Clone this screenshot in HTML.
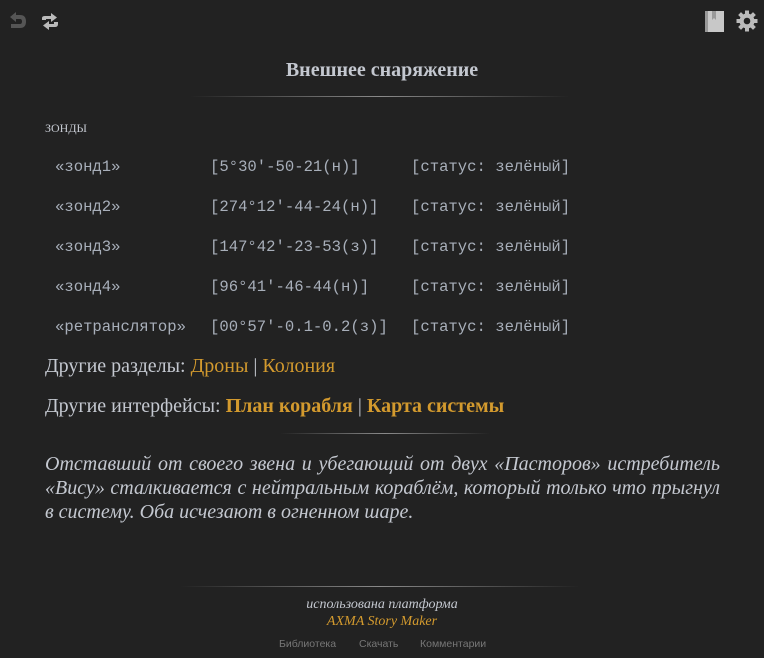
<!DOCTYPE html>
<html><head><meta charset="utf-8"><style>
html,body{margin:0;padding:0;background:#222;width:764px;height:658px;overflow:hidden;}
body{font-family:"Liberation Serif",serif;color:#c4c8d0;position:relative;}
.a{position:absolute;white-space:nowrap;}
.mono{font-family:"Liberation Mono",monospace;font-size:15.6px;color:#a8afba;}
.or{color:#d39a2e;}
.hr{position:absolute;height:1px;background:linear-gradient(to right,rgba(140,140,140,0),#8a8a8a 50%,rgba(140,140,140,0));}
.f{font-family:'Liberation Sans',sans-serif;font-size:10.5px;color:#777;}
</style></head><body>
<svg class="a" style="left:7px;top:11px" width="22" height="22" viewBox="0 0 22 22"><path d="M3 6 L9 1 L9 4 L13 4 Q19 4 19 10.5 Q19 17 13 17 L4 17 L4 13 L13 13 Q15 13 15 10.5 Q15 8 13 8 L9 8 L9 11 Z" fill="#555"/></svg>
<svg class="a" style="left:39px;top:11px" width="22" height="22" viewBox="0 0 22 22"><path d="M3 9 L3 7 Q3 5 6 5 L12 5 L12 2 L18 6.5 L12 11 L12 8 L7 8 L7 9 Z" fill="#bbb"/><path d="M19 11 L19 13 Q19 16 16 16 L10 16 L10 19 L4 14.5 L10 10 L10 13 L15 13 L15 11 Z" fill="#bbb"/></svg>
<svg class="a" style="left:703px;top:10px" width="22" height="23" viewBox="0 0 22 23"><rect x="2" y="1" width="19" height="21" fill="#c8c8c8"/><rect x="2" y="1" width="3" height="21" fill="#999"/><path d="M9 1 L9 10 L11 8 L13 10 L13 1 Z" fill="#999"/></svg>
<svg class="a" style="left:736px;top:10px" width="22" height="22" viewBox="0 0 22 22"><g fill="#bbb" transform="translate(11 11)"><circle r="7.5"/><g><rect x="-2" y="-10.5" width="4" height="21"/><rect x="-2" y="-10.5" width="4" height="21" transform="rotate(45)"/><rect x="-2" y="-10.5" width="4" height="21" transform="rotate(90)"/><rect x="-2" y="-10.5" width="4" height="21" transform="rotate(135)"/></g></g><circle cx="11" cy="11" r="3.3" fill="#222"/></svg>

<div class="a" style="left:0;width:764px;text-align:center;top:59px;font-size:20px;font-weight:bold;">Внешнее снаряжение</div>
<div class="hr" style="left:190px;width:380px;top:96px"></div>
<div class="a" style="left:45px;top:117px;font-size:17px;font-variant:small-caps;">зонды</div>

<div class="a mono" style="left:55px;top:158px">«зонд1»</div><div class="a mono" style="left:210px;top:158px">[5°30'-50-21(н)]</div><div class="a mono" style="left:411px;top:158px">[статус: зелёный]</div>
<div class="a mono" style="left:55px;top:198px">«зонд2»</div><div class="a mono" style="left:210px;top:198px">[274°12'-44-24(н)]</div><div class="a mono" style="left:411px;top:198px">[статус: зелёный]</div>
<div class="a mono" style="left:55px;top:238px">«зонд3»</div><div class="a mono" style="left:210px;top:238px">[147°42'-23-53(з)]</div><div class="a mono" style="left:411px;top:238px">[статус: зелёный]</div>
<div class="a mono" style="left:55px;top:278px">«зонд4»</div><div class="a mono" style="left:210px;top:278px">[96°41'-46-44(н)]</div><div class="a mono" style="left:411px;top:278px">[статус: зелёный]</div>
<div class="a mono" style="left:55px;top:318px">«ретранслятор»</div><div class="a mono" style="left:210px;top:318px">[00°57'-0.1-0.2(з)]</div><div class="a mono" style="left:411px;top:318px">[статус: зелёный]</div>

<div class="a" style="left:45px;top:355px;font-size:20px;">Другие разделы: <span class="or">Дроны</span> | <span class="or">Колония</span></div>
<div class="a" style="left:45px;top:395px;font-size:20px;">Другие интерфейсы: <b class="or">План корабля</b> | <b class="or">Карта системы</b></div>
<div class="hr" style="left:280px;width:210px;top:433px"></div>
<div class="a" style="left:45px;top:452px;width:675px;white-space:normal;text-align:justify;font-size:20px;font-style:italic;line-height:24px;">Отставший от своего звена и убегающий от двух «Пасторов» истребитель «Вису» сталкивается с нейтральным кораблём, который только что прыгнул в систему. Оба исчезают в огненном шаре.</div>

<div class="hr" style="left:180px;width:400px;top:586px"></div>
<div class="a" style="left:0;width:764px;text-align:center;top:596px;font-size:14px;font-style:italic;line-height:17px;">использована платформа<br><span class="or">AXMA Story Maker</span></div>
<div class="a f" style="left:279px;top:638px;">Библиотека</div>
<div class="a f" style="left:359px;top:638px;">Скачать</div>
<div class="a f" style="left:420px;top:638px;">Комментарии</div>
</body></html>
